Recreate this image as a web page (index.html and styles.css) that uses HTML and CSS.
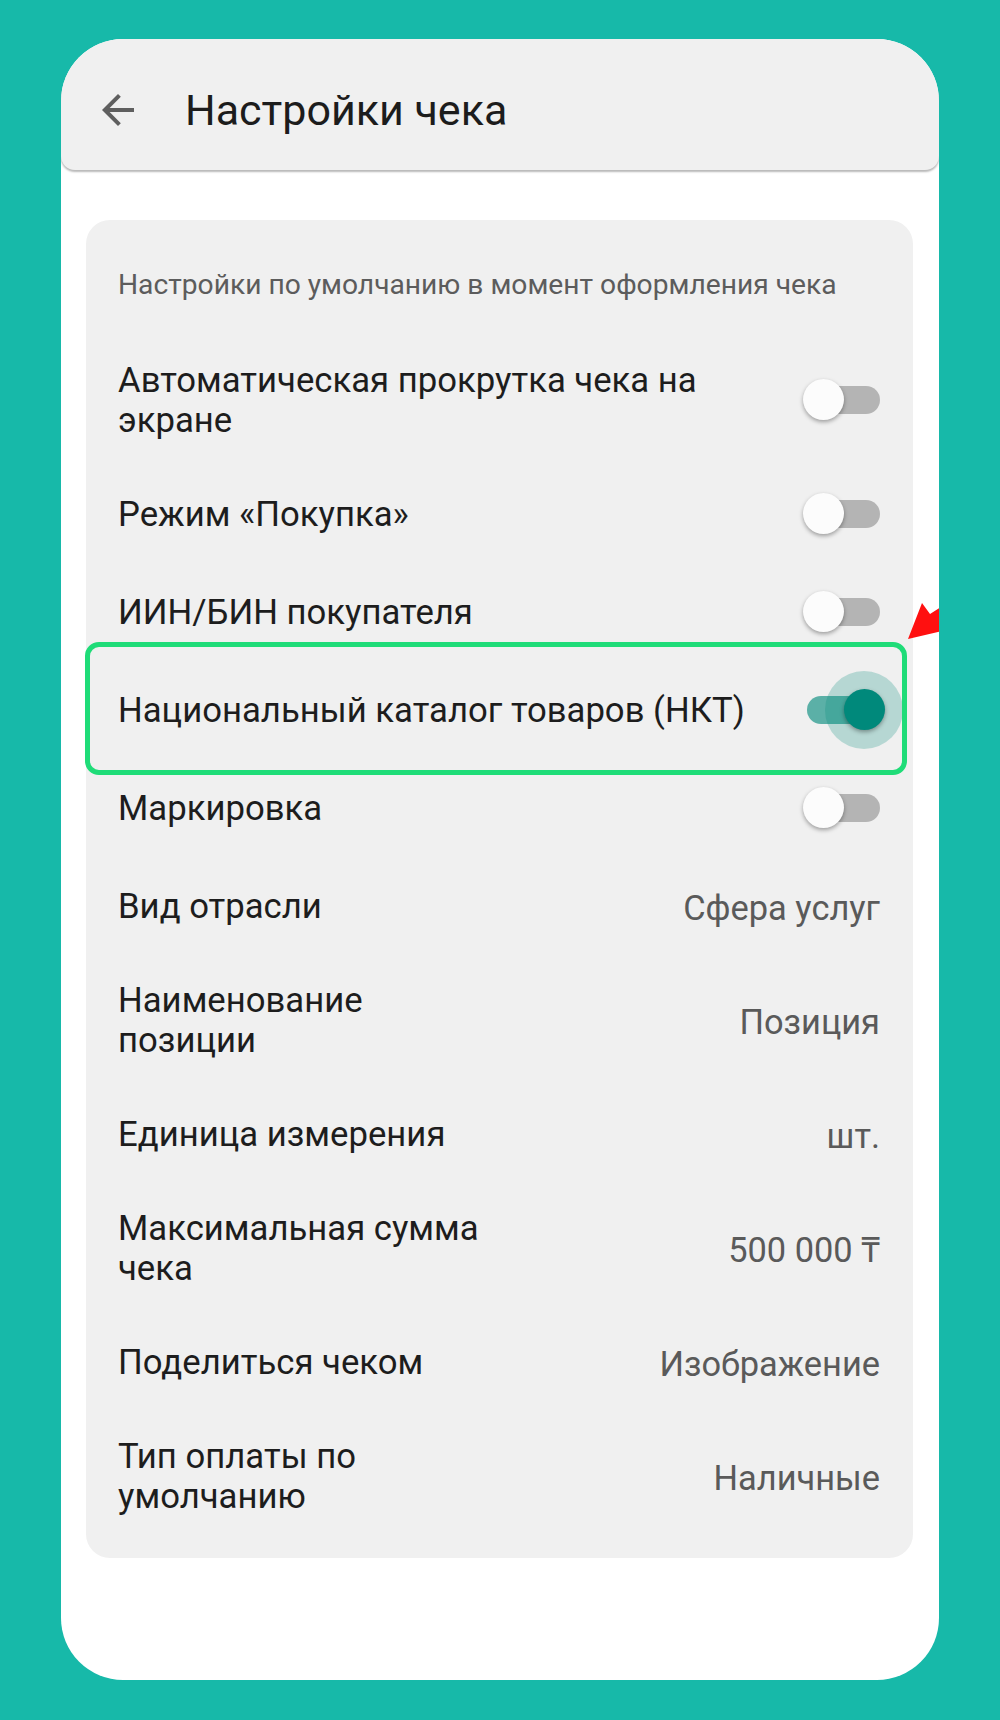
FILE: index.html
```
<!DOCTYPE html>
<html lang="ru">
<head>
<meta charset="utf-8">
<title>Настройки чека</title>
<link rel="stylesheet" href="styles.css">
</head>
<body>
    <div class="phone">
        <div class="top-bar">
            <svg class="back" viewBox="0 0 24 24" width="48" height="48">
                <path d="M20 11H7.83l5.59-5.59L12 4l-8 8 8 8 1.41-1.41L7.83 13H20v-2z"/>
            </svg>
            <div class="title">Настройки чека</div>
        </div>

        <div class="card">
            <div class="caption">Настройки по умолчанию в момент оформления чека</div>

            <div class="row">
                <div class="label wide">Автоматическая прокрутка чека на экране</div>
                <div class="switch"><span class="track"></span><span class="thumb"></span></div>
            </div>
            <div class="row">
                <div class="label wide">Режим «Покупка»</div>
                <div class="switch"><span class="track"></span><span class="thumb"></span></div>
            </div>
            <div class="row">
                <div class="label wide">ИИН/БИН покупателя</div>
                <div class="switch"><span class="track"></span><span class="thumb"></span></div>
            </div>
            <div class="row marked">
                <div class="label wide">Национальный каталог товаров (НКТ)</div>
                <div class="switch on"><span class="track"></span><span class="halo"></span><span class="thumb"></span></div>
                <div class="frame"></div>
            </div>
            <div class="row">
                <div class="label wide">Маркировка</div>
                <div class="switch"><span class="track"></span><span class="thumb"></span></div>
            </div>
            <div class="row">
                <div class="label">Вид отрасли</div>
                <div class="value">Сфера услуг</div>
            </div>
            <div class="row">
                <div class="label">Наименование позиции</div>
                <div class="value">Позиция</div>
            </div>
            <div class="row">
                <div class="label">Единица измерения</div>
                <div class="value">шт.</div>
            </div>
            <div class="row">
                <div class="label">Максимальная сумма чека</div>
                <div class="value">500 000 ₸</div>
            </div>
            <div class="row">
                <div class="label">Поделиться чеком</div>
                <div class="value">Изображение</div>
            </div>
            <div class="row">
                <div class="label">Тип оплаты по умолчанию</div>
                <div class="value">Наличные</div>
            </div>
        </div>

        <!-- red pointer, cut by the phone edge -->
        <svg class="pointer" viewBox="0 0 50 55" width="50" height="55">
            <polygon points="7,45 21,9 29,20 60,0 70,10 40,30 50,35" fill="#ff1010"/>
        </svg>
    </div>
</body>
</html>
```

FILE: styles.css
```
html{
    background: #17b9a9;
}
body{
    margin: 0;
    padding: 39px 0 0 61px;
    font-family: Roboto, "Noto Sans", sans-serif;
}
.phone{
    position: relative;
    width: 878px;
    height: 1641px;
    background: #fff;
    border-radius: 62px;
    overflow: hidden;
}

/* header */
.top-bar{
    height: 131px;
    box-sizing: border-box;
    padding: 10px 0 0 33px;
    display: flex;
    align-items: center;
    background: #f0f0f0;
    border-radius: 0 0 14px 14px;
    box-shadow: 0 2px 2px rgba(0,0,0,0.28);
}
.back{
    fill: #5f5f5f;
    flex: none;
}
.title{
    margin-left: 43px;
    font-size: 43px;
    color: #1c1c1c;
}

/* settings card */
.card{
    margin: 50px 26px 0 25px;
    padding: 0 33px 17px 32px;
    background: #f0f0f0;
    border-radius: 24px;
}
.caption{
    padding: 49px 0 34px;
    font-size: 28.2px;
    line-height: 32px;
    color: #5c5c5c;
}
.row{
    position: relative;
    min-height: 98px;
    box-sizing: border-box;
    padding: 25px 0;
    display: flex;
    align-items: center;
    justify-content: space-between;
}
.label{
    max-width: 390px;
    font-size: 34.7px;
    line-height: 40px;
    color: #1d1d1d;
}
.label.wide{
    max-width: 640px;
}
.value{
    padding-top: 3px;
    font-size: 34.4px;
    line-height: 40px;
    color: #5a5a5a;
    text-align: right;
}

/* switches */
.switch{
    position: relative;
    flex: none;
    width: 82px;
    height: 42px;
    margin-right: -5px;
}
.switch .track{
    position: absolute;
    left: 4px;
    top: 7px;
    width: 73px;
    height: 28px;
    border-radius: 14px;
    background: #b4b4b4;
}
.switch .thumb{
    position: absolute;
    left: 0;
    top: 0;
    width: 41px;
    height: 41px;
    border-radius: 50%;
    background: #fcfcfc;
    box-shadow: 0 2px 4px rgba(0,0,0,0.35);
}
.switch.on .track{
    background: rgba(0,137,123,0.62);
}
.switch.on .thumb{
    left: 41px;
    background: #00897b;
}
.switch .halo{
    position: absolute;
    left: 22px;
    top: -18px;
    width: 78px;
    height: 78px;
    border-radius: 50%;
    background: rgba(0,137,123,0.24);
}

/* green highlight round the NKT row */
.frame{
    position: absolute;
    left: -33px;
    right: -27px;
    top: -19px;
    bottom: -16px;
    border: 5px solid #1fdc78;
    border-radius: 14px;
    pointer-events: none;
}

.pointer{
    position: absolute;
    left: 840px;
    top: 555px;
}
```
